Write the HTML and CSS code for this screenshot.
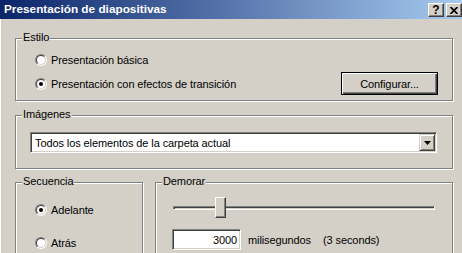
FILE: index.html
```html
<!DOCTYPE html>
<html lang="es">
<head>
<meta charset="utf-8">
<title>Presentación de diapositivas</title>
<link rel="stylesheet" href="styles.css">
</head>
<body>
<div class="window">
  <div class="titlebar">
    <span class="title">Presentación de diapositivas</span>
    <div class="caps">
      <button class="cap help">?</button>
      <button class="cap close"><svg width="8" height="7" viewBox="0 0 8 7"><path d="M0.5 0 L7.5 7 M7.5 0 L0.5 7" stroke="#000" stroke-width="1.7" fill="none"/></svg></button>
    </div>
  </div>
  <div class="body">
    <section class="group estilo">
      <div class="legend">Estilo</div>
      <div class="row row1"><span class="radio"></span><span>Presentación básica</span></div>
      <div class="row row2"><span class="radio checked"></span><span>Presentación con efectos de transición</span><button class="btn">Configurar...</button></div>
    </section>
    <section class="group imagenes">
      <div class="legend">Imágenes</div>
      <div class="combo"><span class="combo-text">Todos los elementos de la carpeta actual</span><span class="combo-btn"><svg width="7" height="4" viewBox="0 0 7 4"><polygon points="0,0 7,0 3.5,4" fill="#000"/></svg></span></div>
    </section>
    <div class="bottom">
      <section class="group secuencia">
        <div class="legend">Secuencia</div>
        <div class="row adelante"><span class="radio checked"></span><span>Adelante</span></div>
        <div class="row atras"><span class="radio"></span><span>Atrás</span></div>
      </section>
      <section class="group demorar">
        <div class="legend">Demorar</div>
        <div class="slider"><div class="track"></div><div class="thumb"></div></div>
        <div class="delay"><span class="num">3000</span><span class="unit">milisegundos</span><span class="secs">(3 seconds)</span></div>
      </section>
    </div>
  </div>
</div>
</body>
</html>
```
FILE: styles.css
```css
html, body {
  margin: 0;
  padding: 0;
  background: #d4d0c8;
}
body {
  font-family: "Liberation Sans", Arial, sans-serif;
  font-size: 11px;
  letter-spacing: -0.1px;
  color: #000;
}
.window {
  width: 462px;
  height: 253px;
  background: #d4d0c8;
  overflow: hidden;
}
.titlebar {
  height: 19px;
  display: flex;
  align-items: flex-start;
  background: linear-gradient(to right, #0a246a, #a6caf0);
}
.title {
  flex: 1;
  color: #fff;
  font-weight: bold;
  font-size: 11.8px;
  letter-spacing: 0;
  line-height: 19px;
  padding-left: 4px;
  white-space: nowrap;
}
.caps {
  display: flex;
  gap: 2px;
  padding-top: 3px;
}
.cap {
  box-sizing: border-box;
  width: 16px;
  height: 14px;
  padding: 0;
  margin: 0;
  background: #d4d0c8;
  border: 1px solid;
  border-color: #fff #404040 #404040 #fff;
  box-shadow: inset -1px -1px #808080;
  display: flex;
  align-items: center;
  justify-content: center;
  font-family: "Liberation Sans", Arial, sans-serif;
  font-weight: bold;
  font-size: 12px;
  line-height: 12px;
  color: #000;
}
.body {
  height: 234px;
  padding: 19px 0 0 15px;
  box-shadow: inset 1px 0 #fff;
}
.group {
  box-sizing: border-box;
  border: 1px solid #808080;
  box-shadow: inset 1px 1px #fff, 1px 1px #fff;
  display: flex;
  flex-direction: column;
}
.legend {
  align-self: flex-start;
  margin: -8px 0 0 6px;
  padding: 0 1px;
  line-height: 13px;
  background: #d4d0c8;
  white-space: nowrap;
}
.row {
  display: flex;
  align-items: center;
  height: 13px;
  margin-left: 19px;
  white-space: nowrap;
}
.radio {
  position: relative;
  box-sizing: border-box;
  width: 12px;
  height: 12px;
  margin-right: 4px;
  border-radius: 50%;
  border: 1px solid;
  border-color: #808080 #fff #fff #808080;
  flex: none;
}
.radio::before {
  content: "";
  position: absolute;
  inset: 0;
  box-sizing: border-box;
  border-radius: 50%;
  border: 1px solid;
  border-color: #404040 #d4d0c8 #d4d0c8 #404040;
  background: #fff;
}
.radio.checked::after {
  content: "";
  position: absolute;
  left: 3px;
  top: 3px;
  width: 4px;
  height: 4px;
  border-radius: 50%;
  background: #000;
}
.estilo {
  width: 438px;
  padding-bottom: 5px;
}
.estilo .row1 {
  margin-top: 9px;
}
.estilo .row2 {
  margin-top: 6px;
  height: 23px;
}
.btn {
  box-sizing: border-box;
  margin: 0 14px 0 auto;
  width: 97px;
  height: 23px;
  padding: 0;
  background: #d4d0c8;
  border: 1px solid #000;
  box-shadow: inset 1px 1px #fff, inset -1px -1px #404040, inset -2px -2px #808080;
  font-family: "Liberation Sans", Arial, sans-serif;
  font-size: 11px;
  letter-spacing: -0.1px;
  color: #000;
}
.imagenes {
  width: 438px;
  margin-top: 14px;
  padding-bottom: 15px;
}
.combo {
  box-sizing: border-box;
  width: 407px;
  height: 21px;
  margin: 11px 0 0 14px;
  padding: 1px 1px 1px 4px;
  display: flex;
  align-items: center;
  background: #fff;
  border: 1px solid;
  border-color: #808080 #fff #fff #808080;
  box-shadow: inset 1px 1px #404040, inset -1px -1px #d4d0c8;
}
.combo-text {
  flex: 1;
  white-space: nowrap;
}
.combo-btn {
  box-sizing: border-box;
  width: 16px;
  height: 17px;
  display: flex;
  align-items: center;
  justify-content: center;
  background: #d4d0c8;
  border: 1px solid;
  border-color: #d4d0c8 #404040 #404040 #d4d0c8;
  box-shadow: inset 1px 1px #fff, inset -1px -1px #808080;
}
.bottom {
  display: flex;
  gap: 12px;
  margin-top: 13px;
}
.secuencia {
  width: 128px;
  height: 90px;
}
.secuencia .adelante {
  margin-top: 15px;
}
.secuencia .atras {
  margin-top: 20px;
}
.demorar {
  width: 298px;
  height: 90px;
}
.slider {
  position: relative;
  width: 262px;
  height: 21px;
  margin: 9px 0 0 17px;
}
.track {
  box-sizing: border-box;
  height: 4px;
  margin-top: 9px;
  border: 1px solid;
  border-color: #808080 #fff #fff #808080;
  box-shadow: inset 1px 1px #404040;
  background: #d4d0c8;
}
.thumb {
  position: absolute;
  left: 42px;
  top: 0;
  box-sizing: border-box;
  width: 11px;
  height: 21px;
  background: #d4d0c8;
  border: 1px solid;
  border-color: #fff #404040 #404040 #fff;
  box-shadow: inset -1px -1px #808080;
}
.delay {
  display: flex;
  align-items: center;
  height: 21px;
  margin: 11px 0 0 16px;
  white-space: nowrap;
}
.num {
  box-sizing: border-box;
  width: 69px;
  height: 21px;
  padding: 0 3px 0 0;
  display: flex;
  align-items: center;
  justify-content: flex-end;
  background: #fff;
  border: 1px solid;
  border-color: #808080 #fff #fff #808080;
  box-shadow: inset 1px 1px #404040, inset -1px -1px #d4d0c8;
}
.unit {
  margin-left: 7px;
}
.secs {
  margin-left: 12px;
}
```
